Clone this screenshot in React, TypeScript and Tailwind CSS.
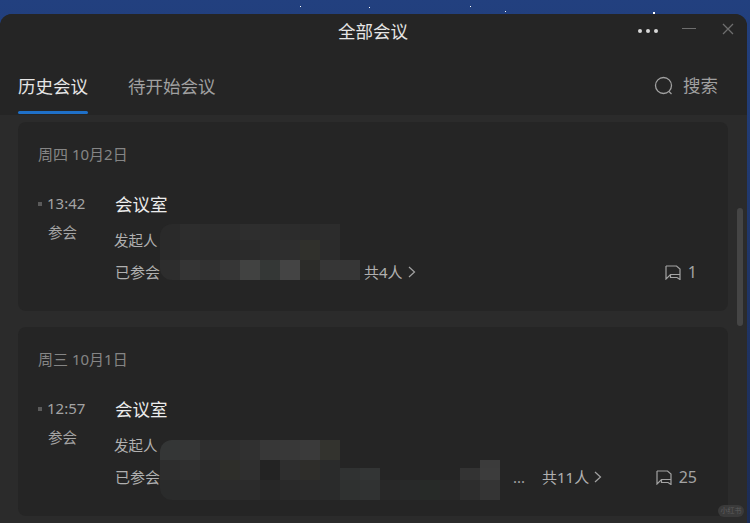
import React from "react";

type Row = { h: string; cells: string[] };

const t = "transparent";

const mosaicA: Row[] = [
  { h: "h-[16px]", cells: ["#2a2a2a", "#2d2d2d", "#2c2c2c", "#2c2c2c", "#2e2e2e", "#2d2d2d", "#2c2c2c", "#2b2b2b", "#2c2c2c"] },
  { h: "h-[20px]", cells: ["#2a2a2a", "#2c2c2c", "#2b2b2b", "#2a2a2a", "#2b2b2b", "#2d2d2d", "#2e2e2e", "#30302c", "#2b2b2b"] },
  { h: "h-[20px]", cells: ["#2d2d2d", "#343434", "#313131", "#363636", "#414241", "#343736", "#444444", "#2c2c29", "#363636", "#363636"] },
];

const mosaicB: Row[] = [
  { h: "h-[20px]", cells: ["#343636", "#353636", "#2e2e2e", "#2e2e2e", "#303030", "#373737", "#383838", "#3a3a3a", "#33332e"] },
  { h: "h-[8px]", cells: ["#2d2d2d", "#2f2f2f", "#2b2b2b", "#2e2e2a", "#2f2f2f", "#232323", "#2e2e2e", "#2e2d2a", "#2a2b2b", t, t, t, t, t, t, t, "#3b3b3b"] },
  { h: "h-[12px]", cells: ["#2d2d2d", "#2f2f2f", "#2b2b2b", "#2e2e2a", "#2f2f2f", "#232323", "#2e2e2e", "#2e2d2a", "#2a2b2b", "#303232", "#333535", t, t, t, t, "#333333", "#3c3c3c"] },
  { h: "h-[20px]", cells: ["#2a2b2b", "#2a2b2b", "#2b2b2b", "#2b2b2b", "#2b2b2b", "#272727", "#292929", "#2a2a2a", "#2a2b2b", "#2f3130", "#303232", "#282828", "#282929", "#272a28", "#282828", "#2d2d2d", "#343434"] },
];

const Mosaic = ({ rows, className }: { rows: Row[]; className: string }) => (
  <div className={`absolute flex flex-col overflow-hidden rounded-l-xl ${className}`}>
    {rows.map((row, i) => (
      <div key={i} className={`flex ${row.h}`}>
        {row.cells.map((c, j) => (
          <div key={j} className="w-[20px]" style={{ backgroundColor: c }} />
        ))}
      </div>
    ))}
  </div>
);

const ChatIcon = () => (
  <svg width="16" height="15" viewBox="0 0 16 15" fill="none" stroke="#a3a3a3" strokeWidth="1.2">
    <path d="M1 1H11.5L15 4V14.5L12 12.5H5.5V9.5" />
    <path d="M1 1V14L5.5 9.5H15" />
  </svg>
);

const Chevron = () => (
  <svg width="8" height="12" viewBox="0 0 8 12" fill="none" stroke="#a3a3a3" strokeWidth="1.2">
    <path d="M1 1L6.5 6L1 11" />
  </svg>
);

type CardProps = {
  date: string;
  time: string;
  total: string;
  comments: string;
  mosaic: Row[];
  mosaicClass: string;
  labelWidth: string;
  more?: boolean;
};

const MeetingCard = ({ date, time, total, comments, mosaic, mosaicClass, labelWidth, more }: CardProps) => (
  <div className="relative h-[189px] rounded-lg bg-[#252525] pt-[21px] pl-[20px] pr-[31px]">
    <div className="h-[22px] text-[15px] leading-[22px] text-[#858585]">{date}</div>
    <div className="mt-[26px] flex">
      <div className="w-[77px]">
        <div className="flex h-[26px] items-center">
          <span className="h-[4px] w-[4px] bg-[#5a5a5a]" />
          <span className="-mt-[2px] ml-[5px] text-[15px] text-[#a3a3a3]">{time}</span>
        </div>
        <div className="mt-[4px] ml-[10px] text-[14.5px] leading-[22px] text-[#a3a3a3]">参会</div>
      </div>
      <div className="flex-1">
        <div className="h-[26px] text-[17.5px] leading-[26px] text-[#ececec]">会议室</div>
        <div className="mt-[12px] -ml-px h-[22px] text-[14.5px] leading-[22px] text-[#b0b0b0]">发起人</div>
        <div className="mt-[10px] flex h-[22px] items-center text-[15px] leading-[22px] text-[#b0b0b0]">
          <span className={labelWidth}>已参会</span>
          {more && <span className="mr-[17px] w-[12px] text-[#a3a3a3]">...</span>}
          <span>{total}</span>
          <span className="ml-[5px]">
            <Chevron />
          </span>
          <span className="ml-auto">
            <ChatIcon />
          </span>
          <span className="ml-[7px] text-[16px] text-[#a3a3a3]">{comments}</span>
        </div>
      </div>
    </div>
    <Mosaic rows={mosaic} className={mosaicClass} />
  </div>
);

export default function App() {
  return (
    <div className="relative h-[523px] w-[750px] overflow-hidden bg-gradient-to-b from-[#22407f] to-[#1c2c55] pt-[14px] pr-[3px] font-['Noto_Sans','Noto_Sans_CJK_SC',sans-serif]">
      <span className="absolute top-[6px] left-[300px] h-px w-px bg-white" />
      <span className="absolute top-[7px] left-[369px] h-px w-px bg-white" />
      <span className="absolute top-[6px] left-[470px] h-px w-px bg-white" />
      <span className="absolute top-[11px] left-[505px] h-px w-px bg-white" />
      <span className="absolute top-[12px] left-[653px] h-[2px] w-[2px] bg-white" />

      <div className="h-[509px] overflow-hidden rounded-t-xl bg-[#2b2b2b]">
        <div className="bg-[#252525]">
          <div className="grid h-[34px] grid-cols-[1fr_auto_1fr] items-center">
            <div />
            <div className="-ml-px text-[17.5px] text-[#e6e6e6]">全部会议</div>
            <div className="flex items-center justify-end">
              <div className="flex gap-[4px]">
                <span className="h-[4px] w-[4px] rounded-full bg-[#d8d8d8]" />
                <span className="h-[4px] w-[4px] rounded-full bg-[#d8d8d8]" />
                <span className="h-[4px] w-[4px] rounded-full bg-[#d8d8d8]" />
              </div>
              <span className="mb-[6px] ml-[24px] h-[1px] w-[14px] bg-[#6e6e6e]" />
              <svg className="mr-[13px] ml-[26px] mb-[4px]" width="12" height="12" viewBox="0 0 12 12" stroke="#6e6e6e" strokeWidth="1.3">
                <path d="M1 1L11 11M11 1L1 11" />
              </svg>
            </div>
          </div>
          <div className="flex pr-[29px] pl-[18px]">
            <div className="pt-[25px]">
              <div className="text-[17.5px] leading-[26px] text-[#e6e6e6]">历史会议</div>
              <div className="mt-[12px] h-[3px] rounded-full bg-[#1f70c8]" />
              <div className="h-px" />
            </div>
            <div className="ml-[40px] pt-[25px] text-[17.5px] leading-[26px] text-[#a0a0a0]">待开始会议</div>
            <div className="ml-auto flex h-[67px] items-center pt-[8px]">
              <svg width="20" height="20" viewBox="0 0 20 20" fill="none" stroke="#a0a0a0" strokeWidth="1.3">
                <circle cx="9.5" cy="9.5" r="8" />
                <path d="M15 15.5L17.5 18" />
              </svg>
              <span className="ml-[9px] text-[17.5px] text-[#a0a0a0]">搜索</span>
            </div>
          </div>
        </div>

        <div className="flex flex-col gap-[16px] pt-[7px] pr-[19px] pl-[18px]">
          <MeetingCard
            date="周四 10月2日"
            time="13:42"
            total="共4人"
            comments="1"
            mosaic={mosaicA}
            mosaicClass="top-[102px] left-[142px]"
            labelWidth="w-[249px]"
          />
          <MeetingCard
            date="周三 10月1日"
            time="12:57"
            total="共11人"
            comments="25"
            mosaic={mosaicB}
            mosaicClass="top-[113px] left-[142px]"
            labelWidth="w-[398px]"
            more
          />
        </div>
      </div>

      <div className="absolute top-[208px] left-[737px] h-[118px] w-[6px] rounded-full bg-[#454545]" />
      <div className="absolute top-[505px] left-[718px] flex h-[12px] w-[26px] items-center justify-center rounded-full bg-[#3a3a3a] text-[7px] text-[#5c5c5c]">
        小红书
      </div>
    </div>
  );
}
